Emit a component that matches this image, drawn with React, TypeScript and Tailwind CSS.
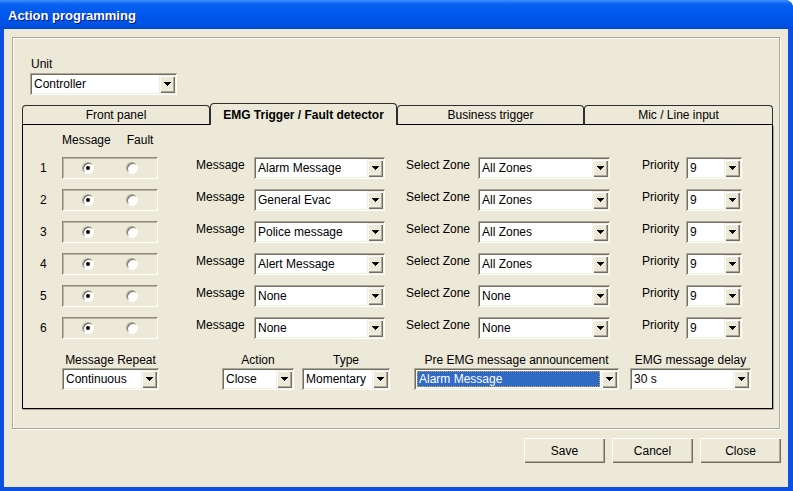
import React from 'react';

// Windows XP "Action programming" dialog
const FONT = "font-['Liberation_Sans',Arial,sans-serif]";

function Arrow() {
  return (
    <svg width="7" height="4" viewBox="0 0 7 4" shapeRendering="crispEdges">
      <path d="M0 0h7v1h-1v1h-1v1h-1v1h-1v-1h-1v-1h-1v-1h-1z" fill="#000" />
    </svg>
  );
}

function DropButton() {
  return (
    <div className="flex w-[16px] shrink-0 items-center justify-center bg-[#ece9d8] shadow-[inset_1px_1px_0_#f1efe2,inset_2px_2px_0_#ffffff,inset_-1px_-1px_0_#716f64,inset_-2px_-2px_0_#aca899]">
      <Arrow />
    </div>
  );
}

function Combo({ className, value, active }: { className: string; value: string; active?: boolean }) {
  return (
    <div
      className={`flex h-[22px] shrink-0 bg-white p-[2px] shadow-[inset_1px_1px_0_#aca899,inset_-1px_-1px_0_#ffffff,inset_2px_2px_0_#716f64,inset_-2px_-2px_0_#f1efe2] ${className}`}
    >
      {active ? (
        <div className="flex min-w-0 flex-1 items-center p-[1px] pr-[1px]">
          <span className="flex h-full flex-1 items-center border border-dotted border-[#cea94a] bg-[#316ac5] pl-[1px] text-white">
            {value}
          </span>
        </div>
      ) : (
        <div className="flex min-w-0 flex-1 items-center pl-[2px]">
          <span className="truncate">{value}</span>
        </div>
      )}
      <DropButton />
    </div>
  );
}

function Radio({ checked }: { checked?: boolean }) {
  return (
    <div className="flex h-[12px] w-[12px] items-center justify-center rounded-full border border-t-[#aca899] border-l-[#aca899] border-r-white border-b-white bg-white shadow-[inset_1px_1px_0_#716f64]">
      {checked && <div className="h-[4px] w-[4px] rounded-full bg-black" />}
    </div>
  );
}

const rows = [
  { msg: 'Alarm Message', zone: 'All Zones' },
  { msg: 'General Evac', zone: 'All Zones' },
  { msg: 'Police message', zone: 'All Zones' },
  { msg: 'Alert Message', zone: 'All Zones' },
  { msg: 'None', zone: 'None' },
  { msg: 'None', zone: 'None' },
];

function TriggerRow({ n, msg, zone }: { n: number; msg: string; zone: string }) {
  return (
    <div className="flex h-[22px] items-center">
      <span className="w-[39px] pl-[17px]">{n}</span>
      <div className="flex h-[22px] w-[96px] items-center border border-t-[#8c897c] border-l-[#8c897c] border-r-white border-b-white pl-[19px] shadow-[inset_1px_1px_0_#b9b6a8]">
        <Radio checked />
        <div className="ml-[32px]">
          <Radio />
        </div>
      </div>
      <span className="ml-[38px] w-[58px] self-start pt-[1px]">Message</span>
      <Combo className="w-[131px]" value={msg} />
      <span className="ml-[21px] w-[72px] self-start pt-[1px]">Select Zone</span>
      <Combo className="w-[132px]" value={zone} />
      <span className="ml-[32px] w-[44px] self-start pt-[1px]">Priority</span>
      <Combo className="w-[56px]" value="9" />
    </div>
  );
}

function LabeledCombo({ label, className, value, active }: { label: string; className: string; value: string; active?: boolean }) {
  return (
    <div className={`flex shrink-0 flex-col items-center gap-[1px] ${className}`}>
      <span className="whitespace-nowrap">{label}</span>
      <Combo className="w-full" value={value} active={active} />
    </div>
  );
}

function Tab({ label, className, selected }: { label: string; className: string; selected?: boolean }) {
  if (selected) {
    return (
      <div className={`flex h-[22px] shrink-0 items-center justify-center rounded-t-[4px] border-x border-t border-[#2e2e2e] bg-[#ece9d8] pt-[1px] font-bold ${className}`}>
        {label}
      </div>
    );
  }
  return (
    <div className={`flex h-[20px] shrink-0 items-center justify-center rounded-t-[4px] border border-[#2e2e2e] border-b-black bg-[#ece9d8] ${className}`}>
      {label}
    </div>
  );
}

function PushButton({ label }: { label: string }) {
  return (
    <button
      type="button"
      className="flex h-[25px] w-[81px] items-center justify-center bg-[#ece9d8] shadow-[inset_1px_1px_0_#ffffff,inset_-1px_-1px_0_#716f64,inset_-2px_-2px_0_#aca899]"
    >
      {label}
    </button>
  );
}

export default function App() {
  return (
    <div className={`h-[491px] w-[793px] overflow-hidden bg-white text-[12px] leading-[14px] text-black ${FONT}`}>
      <div className="flex h-full flex-col overflow-hidden rounded-tr-[8px] bg-[#0831d9]">
        {/* title bar */}
        <div className="flex h-[29px] shrink-0 items-center bg-[linear-gradient(to_bottom,#3d8fff_0%,#0a62f0_14%,#0058ee_45%,#0054e6_80%,#0347d4_100%)] pl-[8px] pt-[3px] text-[13px] font-bold text-white [text-shadow:1px_1px_0_#0a1883]">
          Action programming
        </div>

        {/* body */}
        <div className="flex min-h-0 flex-1 flex-col border-b-[4px] border-l-[4px] border-r-[5px] border-[#0b50e3] bg-[#ece9d8]">
          {/* group box */}
          <div className="ml-[8px] mt-[8px] h-[392px] w-[768px] border border-[#aca899] shadow-[inset_1px_1px_0_#ffffff,1px_1px_0_#ffffff]">
            <div className="flex flex-col pl-[17px] pt-[19px]">
              <span className="ml-[1px]">Unit</span>
              <Combo className="mt-[2px] w-[147px]" value="Controller" />
            </div>

            <div className="mt-[8px] pl-[9px]">
              <div className="flex h-[22px] w-[751px] items-end">
                <Tab label="Front panel" className="w-[188px]" />
                <Tab label="EMG Trigger / Fault detector" className="w-[187px]" selected />
                <Tab label="Business trigger" className="w-[187px]" />
                <Tab label="Mic / Line input" className="w-[189px]" />
              </div>

              <div className="flex h-[284px] w-[751px] flex-col border-x border-b border-black shadow-[1px_1px_0_#aca899]">
                <div className="flex pl-[39px] pt-[8px]">
                  <span>Message</span>
                  <span className="ml-[16px]">Fault</span>
                </div>

                <div className="mt-[10px] flex flex-col gap-[10px]">
                  {rows.map((r, i) => (
                    <TriggerRow key={i} n={i + 1} msg={r.msg} zone={r.zone} />
                  ))}
                </div>

                <div className="mt-[14px] flex pl-[39px]">
                  <LabeledCombo label="Message Repeat" className="w-[97px]" value="Continuous" />
                  <LabeledCombo label="Action" className="ml-[63px] w-[72px]" value="Close" />
                  <LabeledCombo label="Type" className="ml-[8px] w-[88px]" value="Momentary" />
                  <LabeledCombo label="Pre EMG message announcement" className="ml-[24px] w-[205px]" value="Alarm Message" active />
                  <LabeledCombo label="EMG message delay" className="ml-[11px] w-[121px]" value="30 s" />
                </div>
              </div>
            </div>
          </div>

          {/* buttons */}
          <div className="mr-[7px] mt-[9px] flex justify-end gap-[7px]">
            <PushButton label="Save" />
            <PushButton label="Cancel" />
            <PushButton label="Close" />
          </div>
        </div>
      </div>
    </div>
  );
}
